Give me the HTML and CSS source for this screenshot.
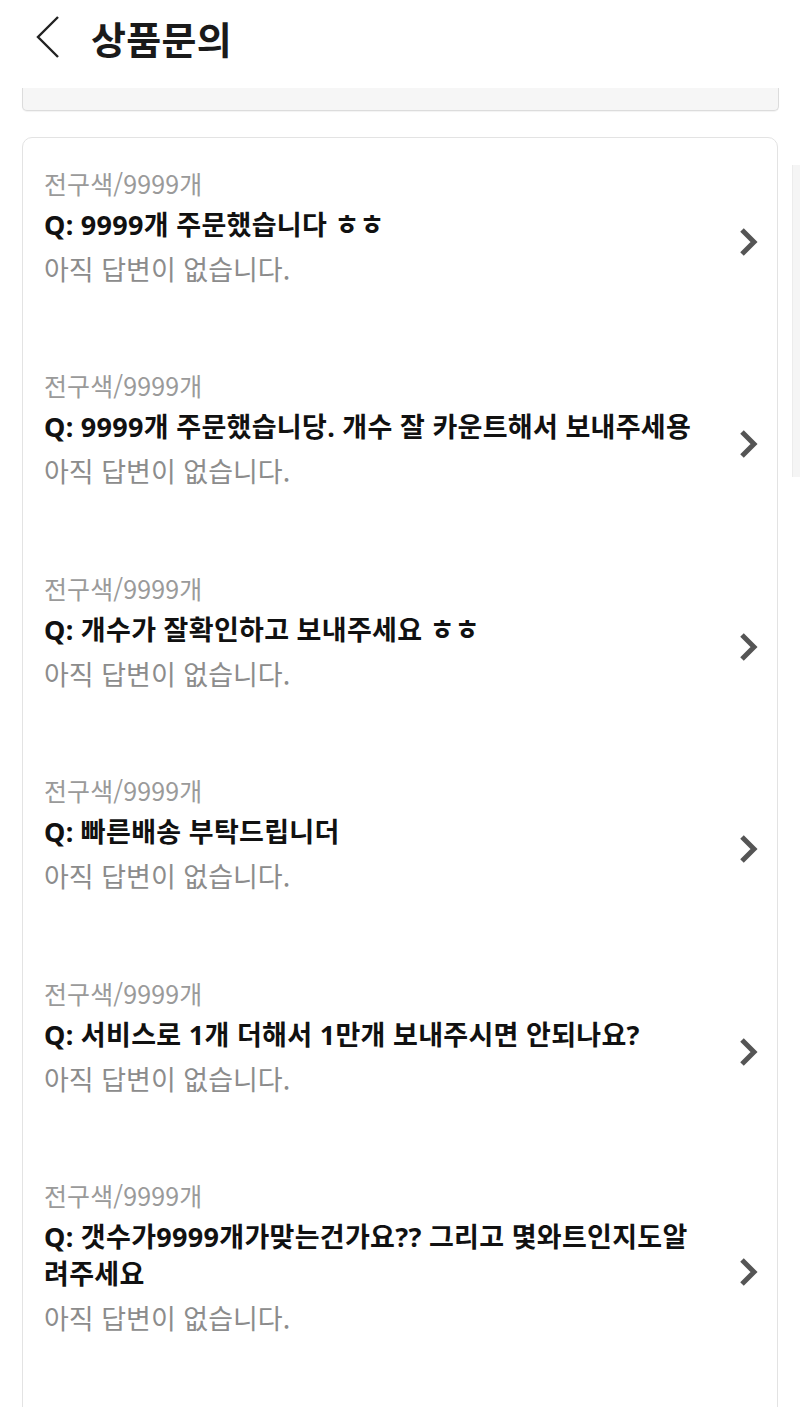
FILE: index.html
```html
<!DOCTYPE html>
<html lang="ko">
<head>
<meta charset="utf-8">
<title>상품문의</title>
<link rel="stylesheet" href="styles.css">
</head>
<body>
<div class="page">
  <header class="topbar">
    <svg class="back" width="26" height="44" viewBox="0 0 26 44"><path d="M23 2 L3 22 L23 42" fill="none" stroke="#222" stroke-width="2.4"/></svg>
    <h1 class="title">상품문의</h1>
  </header>
  <div class="prev-card"></div>
  <section class="qa-card">
    <div class="qa-item">
      <div class="qa-text">
        <div class="qa-option">전구색/9999개</div>
        <div class="qa-question">Q: 9999개 주문했습니다 ㅎㅎ</div>
        <div class="qa-answer">아직 답변이 없습니다.</div>
      </div>
      <svg class="chev" width="22" height="30" viewBox="0 0 22 30"><path d="M4 3 L16 15 L4 27" fill="none" stroke="#555" stroke-width="5"/></svg>
    </div>
    <div class="qa-item">
      <div class="qa-text">
        <div class="qa-option">전구색/9999개</div>
        <div class="qa-question">Q: 9999개 주문했습니당. 개수 잘 카운트해서 보내주세용</div>
        <div class="qa-answer">아직 답변이 없습니다.</div>
      </div>
      <svg class="chev" width="22" height="30" viewBox="0 0 22 30"><path d="M4 3 L16 15 L4 27" fill="none" stroke="#555" stroke-width="5"/></svg>
    </div>
    <div class="qa-item">
      <div class="qa-text">
        <div class="qa-option">전구색/9999개</div>
        <div class="qa-question">Q: 개수가 잘확인하고 보내주세요 ㅎㅎ</div>
        <div class="qa-answer">아직 답변이 없습니다.</div>
      </div>
      <svg class="chev" width="22" height="30" viewBox="0 0 22 30"><path d="M4 3 L16 15 L4 27" fill="none" stroke="#555" stroke-width="5"/></svg>
    </div>
    <div class="qa-item">
      <div class="qa-text">
        <div class="qa-option">전구색/9999개</div>
        <div class="qa-question">Q: 빠른배송 부탁드립니더</div>
        <div class="qa-answer">아직 답변이 없습니다.</div>
      </div>
      <svg class="chev" width="22" height="30" viewBox="0 0 22 30"><path d="M4 3 L16 15 L4 27" fill="none" stroke="#555" stroke-width="5"/></svg>
    </div>
    <div class="qa-item">
      <div class="qa-text">
        <div class="qa-option">전구색/9999개</div>
        <div class="qa-question">Q: 서비스로 1개 더해서 1만개 보내주시면 안되나요?</div>
        <div class="qa-answer">아직 답변이 없습니다.</div>
      </div>
      <svg class="chev" width="22" height="30" viewBox="0 0 22 30"><path d="M4 3 L16 15 L4 27" fill="none" stroke="#555" stroke-width="5"/></svg>
    </div>
    <div class="qa-item">
      <div class="qa-text">
        <div class="qa-option">전구색/9999개</div>
        <div class="qa-question">Q: 갯수가9999개가맞는건가요?? 그리고 몇와트인지도알<br>려주세요</div>
        <div class="qa-answer">아직 답변이 없습니다.</div>
      </div>
      <svg class="chev" width="22" height="30" viewBox="0 0 22 30"><path d="M4 3 L16 15 L4 27" fill="none" stroke="#555" stroke-width="5"/></svg>
    </div>
  </section>
  <div class="side-strip"></div>
</div>
</body>
</html>
```

FILE: styles.css
```css
* { box-sizing: border-box; }
html, body {
  margin: 0;
  padding: 0;
  background: #fff;
}
body {
  font-family: "Noto Sans CJK KR", "Noto Sans", sans-serif;
  color: #111;
  overflow: hidden;
}
.page {
  position: relative;
  width: 800px;
  height: 1407px;
  overflow: hidden;
}
.topbar {
  height: 88px;
  display: flex;
  align-items: center;
  padding-left: 35px;
  padding-bottom: 14px;
  gap: 30px;
}
.back { display: block; }
.title {
  margin: 0;
  font-size: 38px;
  font-weight: 700;
  letter-spacing: 0.3px;
  color: #1a1a1a;
}
.prev-card {
  margin: 0 21px 0 22px;
  height: 23px;
  background: #f6f6f6;
  border: 1px solid #dcdcdc;
  border-top: none;
  border-radius: 0 0 5px 5px;
  box-shadow: 0 1px 1px rgba(0,0,0,0.05);
}
.qa-card {
  margin: 26px 22px 0 22px;
  border: 1px solid #e3e3e3;
  border-radius: 10px;
  padding: 0 17px 0 21px;
  height: 1400px;
}
.qa-item {
  display: flex;
  align-items: center;
  padding: 25px 0 51.4px;
}
.qa-text { flex: 1; }
.qa-option {
  font-size: 25px;
  line-height: 40px;
  color: #9a9a9a;
  letter-spacing: 0.1px;
}
.qa-question {
  margin-top: 3px;
  font-family: "Noto Sans", "Noto Sans CJK KR", sans-serif;
  font-size: 27px;
  line-height: 37px;
  font-weight: 700;
  letter-spacing: 0.3px;
  color: #111;
}
.qa-answer {
  margin-top: 6px;
  font-size: 27px;
  line-height: 40px;
  color: #8c8c8c;
}
.chev {
  display: block;
  margin-top: 32px;
  flex: none;
}
.side-strip {
  position: absolute;
  left: 792px;
  top: 165px;
  width: 8px;
  height: 312px;
  background: #f5f5f5;
  border-left: 1px solid #ececec;
}
```
